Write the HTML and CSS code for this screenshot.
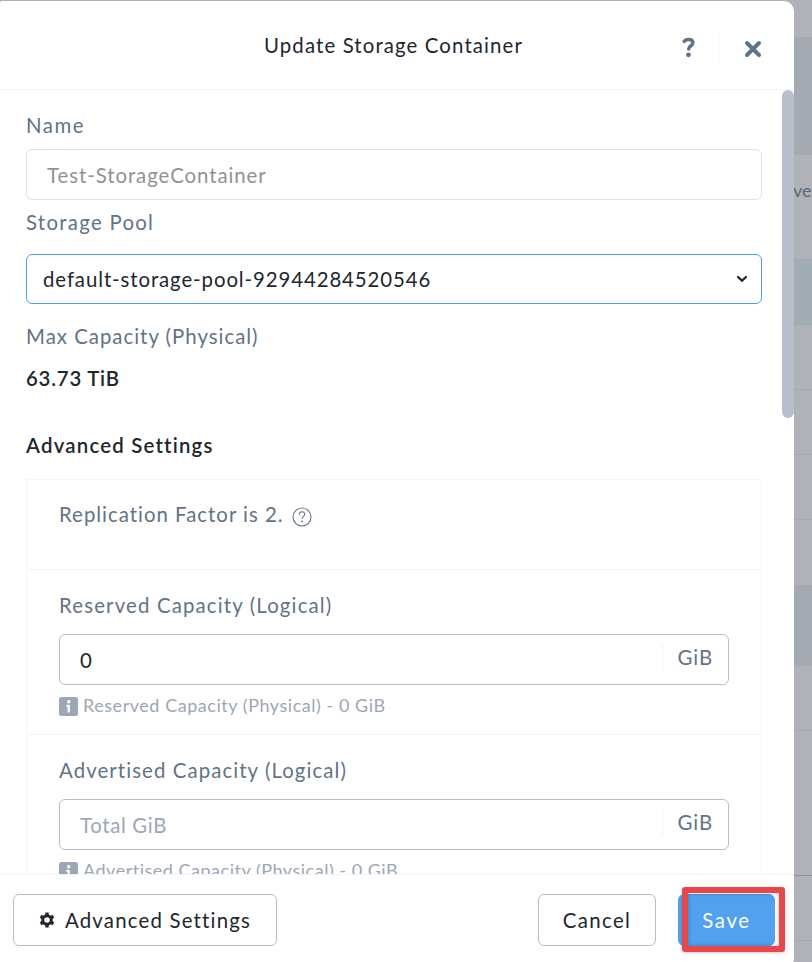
FILE: index.html
```html
<!DOCTYPE html>
<html lang="en">
<head>
<meta charset="utf-8">
<title>Update Storage Container</title>
<link rel="stylesheet" href="styles.css">
</head>
<body>
<main class="modal">
  <header class="header">
    <h1 class="title">Update Storage Container</h1>
    <div class="tools">
      <svg class="help" width="14" height="21" viewBox="0 0 14 21"><path d="M2.2 4.3C4.4 1.8 10.9 1.5 10.9 5.8C10.9 8.9 6.7 8.6 6.7 12" fill="none" stroke="#627386" stroke-width="3.5" stroke-linecap="round" stroke-linejoin="round"/><circle cx="6.5" cy="17.8" r="2.4" fill="#627386"/></svg>
      <span class="split"></span>
      <svg class="close" width="18" height="18" viewBox="0 0 18 18"><path d="M3 3L15 15M15 3L3 15" fill="none" stroke="#627386" stroke-width="4" stroke-linecap="round"/></svg>
    </div>
  </header>
  <section class="body">
    <div class="label name">Name</div>
    <div class="field disabled"><span class="t-name">Test-StorageContainer</span></div>
    <div class="label pool">Storage Pool</div>
    <div class="field select"><span class="t-pool">default-storage-pool-92944284520546</span>
      <svg width="12" height="8" viewBox="0 0 12 8"><path d="M2 2L6 5.6L10 2" fill="none" stroke="#22272e" stroke-width="2.3" stroke-linecap="round"/></svg>
    </div>
    <div class="label max">Max Capacity (Physical)</div>
    <div class="strong size">63.73 TiB</div>
    <div class="strong advanced">Advanced Settings</div>
    <div class="panel">
      <div class="row factor"><span class="label t-factor">Replication Factor is 2.</span>
        <svg width="20" height="20" viewBox="0 0 20 20"><g fill="none" stroke="#627386" stroke-width="1.1"><circle cx="10" cy="10" r="9"/><path d="M7.4 7.4C7.4 3.8 12.7 3.9 12.7 7.2C12.7 9.5 10 9.4 10 12"/></g><circle cx="10" cy="14.4" r=".9" fill="#627386"/></svg>
      </div>
      <div class="row">
        <div class="label t-reserved">Reserved Capacity (Logical)</div>
        <div class="field unit"><span>0</span><span class="suffix">GiB</span></div>
        <div class="hint"><svg width="19" height="19" viewBox="0 0 19 19"><rect width="19" height="19" rx="2.5" fill="#9ca7b5"/><circle cx="9.7" cy="4.8" r="1.7" fill="#fff"/><path d="M8.4 8.9h1.3v5.6" fill="none" stroke="#fff" stroke-width="2.3" stroke-linecap="round" stroke-linejoin="round"/></svg><span class="t-hint1">Reserved Capacity (Physical) - 0 GiB</span></div>
      </div>
      <div class="row">
        <div class="label t-advertised">Advertised Capacity (Logical)</div>
        <div class="field unit empty"><span>Total GiB</span><span class="suffix">GiB</span></div>
        <div class="hint"><svg width="19" height="19" viewBox="0 0 19 19"><rect width="19" height="19" rx="2.5" fill="#9ca7b5"/><circle cx="9.7" cy="4.8" r="1.7" fill="#fff"/><path d="M8.4 8.9h1.3v5.6" fill="none" stroke="#fff" stroke-width="2.3" stroke-linecap="round" stroke-linejoin="round"/></svg><span class="t-hint2">Advertised Capacity (Physical) - 0 GiB</span></div>
      </div>
    </div>
    <span class="thumb"></span>
  </section>
  <footer class="footer">
    <button class="btn settings"><svg width="16" height="16" viewBox="0 0 16 16"><g fill="none" stroke="#22272e"><circle cx="8" cy="8" r="4.3" stroke-width="3"/><path d="M8 .6V3M8 13v2.4M1.6 4.3l2.1 1.2M12.3 10.5l2.1 1.2M1.6 11.7l2.1-1.2M12.3 5.5l2.1-1.2" stroke-width="3.4"/></g></svg><span>Advanced Settings</span></button>
    <button class="btn cancel">Cancel</button>
    <button class="btn save">Save<span class="mark"></span></button>
  </footer>
</main>
<aside class="backdrop">
  <div class="b1"></div><div class="b2"></div><div class="b3">ve</div><div class="b4"></div>
  <div class="line"></div><div class="line"></div><div class="line"></div><div class="b5"></div>
  <div class="b6"></div><div class="line"></div><div class="b7"></div><div class="line"></div>
</aside>
</body>
</html>
```
FILE: styles.css
```css
* { box-sizing: border-box; }
body {
  margin: 0;
  width: 812px;
  height: 962px;
  overflow: hidden;
  display: flex;
  background: #afb2b6;
  color: #22272e;
  font: 20.4px/24px Lato, "Liberation Sans", sans-serif;
  letter-spacing: .4px;
}
svg { display: block; flex: none; }
.modal {
  width: 794px;
  height: 961px;
  margin-top: 1px;
  background: #fff;
  border-radius: 2px 10px 2px 0;
  display: flex;
  flex-direction: column;
  white-space: nowrap;
}
.header {
  height: 89px;
  flex: none;
  border-bottom: 1px solid #f2f4f6;
  display: grid;
  grid-template-columns: 264px 1fr auto;
}
.title { margin: 32px 0 0; grid-column: 2; font-size: inherit; font-weight: 400; letter-spacing: 1.12px; }
.tools { display: flex; padding-right: 32px; }
.help { margin-top: 36px; }
.split { width: 1px; height: 35px; margin: 29px 25px 0 22px; background: #f2f4f6; }
.close { margin-top: 39px; }
.body { height: 784px; flex: none; padding: 23px 32px 0 26px; overflow: hidden; position: relative; }
.label { color: #627386; height: 24px; }
.name { letter-spacing: 1.5px; }
.t-name { letter-spacing: .93px; }
.t-pool { letter-spacing: .9px; }
.t-factor { letter-spacing: 1px; }
.t-reserved { letter-spacing: 1.15px; }
.t-advertised { letter-spacing: 1.08px; }
.t-hint1 { letter-spacing: .54px; }
.t-hint2 { letter-spacing: .51px; }
.field {
  height: 51px;
  border: 1px solid #b8bfca;
  border-radius: 6px;
  display: flex;
  align-items: center;
  padding: 0 15px 0 20px;
}
.disabled { margin-top: 12px; border-color: #dfe1e4; color: #909396; }
.pool { margin-top: 10px; letter-spacing: 1.27px; }
.select { height: 50px; margin-top: 20px; padding: 0 13px 1px 16px; border-color: #4f9fec; justify-content: space-between; }
.max { margin-top: 20px; letter-spacing: 1px; }
.strong { font-weight: 600; height: 24px; }
.size { margin-top: 18px; letter-spacing: .78px; }
.advanced { margin-top: 43px; letter-spacing: 1.2px; }
.panel { margin-top: 22px; border: 1px solid #f2f4f6; }
.row { height: 165px; padding: 23px 32px 0; border-bottom: 1px solid #f2f4f6; }
.factor { height: 90px; padding-top: 22px; display: flex; gap: 8px; }
.factor svg { margin-top: 5px; }
.unit { margin-top: 17px; justify-content: space-between; }
.suffix { height: 29px; margin-top: -4px; padding: 2px 0 0 15px; border-left: 1px solid #f2f4f6; color: #627386; letter-spacing: .9px; }
.empty { color: #9ca7b5; letter-spacing: .65px; }
.hint { display: flex; align-items: center; gap: 5px; height: 24px; margin-top: 8px; color: #9ca7b5; font-size: 18px; }
.hint svg { margin-top: 2px; }
.thumb { position: absolute; right: 0; top: 0; width: 12px; height: 328px; border-radius: 6px; background: #b8bfca; }
.footer { height: 88px; border-top: 1px solid #f2f4f6; padding: 19px 19px 0 13px; display: flex; }
.btn {
  height: 52px;
  padding: 0;
  border: 1px solid #b8bfca;
  border-radius: 6px;
  background: #fff;
  color: inherit;
  font: inherit;
  display: flex;
  align-items: center;
  justify-content: center;
}
.settings { width: 264px; gap: 10px; letter-spacing: 1.2px; }
.cancel { width: 118px; margin-left: auto; letter-spacing: 1.4px; }
.save { width: 97px; margin-left: 22px; border-color: #52a1ef; background: #52a1ef; color: #fff; position: relative; letter-spacing: 1.7px; }
.mark {
  position: absolute;
  left: 3px;
  top: -8px;
  width: 103px;
  height: 65px;
  border: 6px solid #e5474b;
  border-radius: 3px;
  box-shadow: 0 1px 3px #0003, inset 0 0 4px #0004;
}
.backdrop { width: 18px; height: 962px; overflow: hidden; color: #5c6673; letter-spacing: 0; }
.backdrop div { border-bottom: 1px solid #a4a8ad; }
.backdrop .b1 { height: 37px; border: 0; }
.backdrop .b2 { height: 118px; background: #a5a9b2; border: 0; }
.backdrop .b3 { height: 105px; padding-top: 23px; font-size: 18px; text-indent: -1px; }
.backdrop .b4 { height: 65px; background: #a1acb4; }
.backdrop .line { height: 65px; }
.backdrop .b5 { height: 65px; border: 0; }
.backdrop .b6 { height: 81px; background: #a5a9b2; }
.backdrop .b7 { height: 145px; border-color: #8d939d; }
```
